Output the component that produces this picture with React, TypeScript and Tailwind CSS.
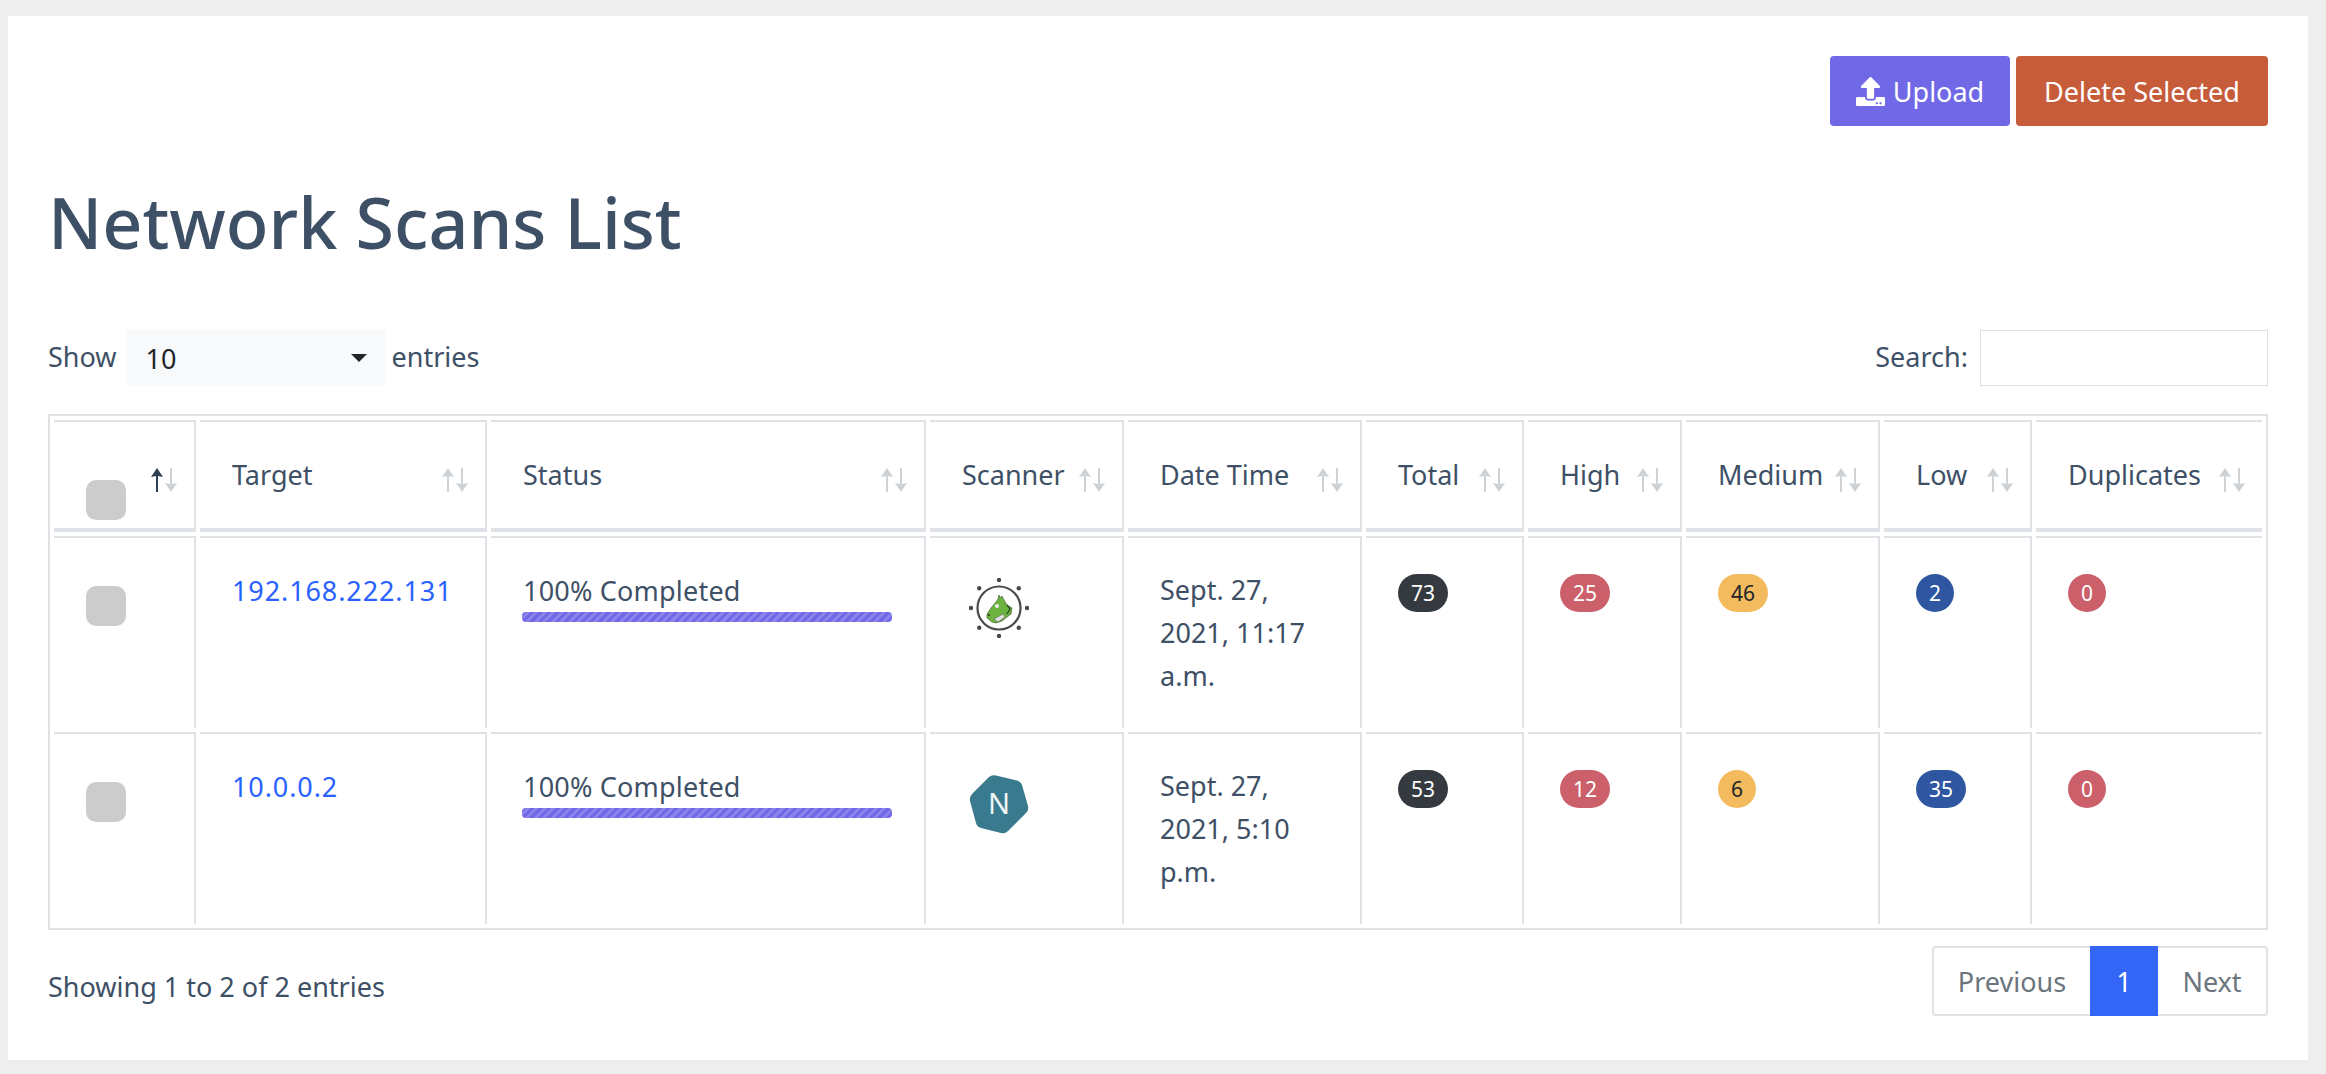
import { FaUpload } from 'react-icons/fa'

const COLUMNS = [
  { label: '', width: 142 },
  { label: 'Target', width: 287 },
  { label: 'Status', width: 435 },
  { label: 'Scanner', width: 194 },
  { label: 'Date Time', width: 234 },
  { label: 'Total', width: 158 },
  { label: 'High', width: 154 },
  { label: 'Medium', width: 194 },
  { label: 'Low', width: 148 },
  { label: 'Duplicates', width: 226 },
]

const ROWS = [
  { target: '192.168.222.131', scanner: 'openvas', date: 'Sept. 27, 2021, 11:17 a.m.', total: 73, high: 25, medium: 46, low: 2, dup: 0 },
  { target: '10.0.0.2', scanner: 'nessus', date: 'Sept. 27, 2021, 5:10 p.m.', total: 53, high: 12, medium: 6, low: 35, dup: 0 },
]

function SortArrows({ active }: { active?: boolean }) {
  return (
    <svg width="26" height="24" viewBox="0 0 26 24" className="absolute top-[46px] right-[17px]">
      <path d="M6 0L12 9L7 8V24H5V8L0 9Z" fill={active ? '#2c3e50' : '#cdd2d7'} />
      <path d="M19 0H21V16L26 15L20 24L14 15L19 16Z" fill="#cdd2d7" />
    </svg>
  )
}

function OpenVasLogo() {
  const dots = [0, 45, 90, 135, 180, 225, 270, 315]
  return (
    <svg width="60" height="60" viewBox="0 0 60 60">
      <circle cx="30" cy="30" r="21.5" fill="none" stroke="#4a4a4a" strokeWidth="2.2" />
      {dots.map(d => (
        <circle
          key={d}
          cx={30 + 28 * Math.cos((d * Math.PI) / 180)}
          cy={30 + 28 * Math.sin((d * Math.PI) / 180)}
          r="2.2"
          fill="#4a4a4a"
        />
      ))}
      <path
        d="M30 17L31 20L33 18L35 22L38 27L43 30L42 36L38 39L33 43L27 45L23 44L18 40L18 36L22 30L27 24L29 21Z"
        fill="#6cb33f"
        stroke="#35502a"
        strokeWidth="0.6"
      />
      <path d="M25 41L34 36L36 39L29 44Z" fill="#dfe2dc" stroke="#555" strokeWidth="0.5" />
      <circle cx="28" cy="28" r="2" fill="#f1f1f1" />
      <circle cx="20" cy="37" r="1" fill="#26331f" />
      <path d="M38 27L41 31L38 36" fill="none" stroke="#2f4a22" strokeWidth="1.3" />
    </svg>
  )
}

function NessusLogo() {
  return (
    <svg width="60" height="60" viewBox="0 0 60 60">
      <path
        d="M20 3Q23 0.500 27 1.500L48 6.500Q52 8 53 11L59 32Q60 36 57 39L39 57Q36 60 32 59L12 54Q8 53 7 49L1 27Q0 24 3 20Z"
        fill="#3a7a8e"
      />
      <text x="30" y="40" textAnchor="middle" fontSize="29" fontFamily="'Noto Sans', sans-serif" fill="#eef5f7">
        N
      </text>
    </svg>
  )
}

function Badge({ value, className }: { value: number; className: string }) {
  return (
    <span className={`mt-[5px] inline-flex h-[38px] min-w-[38px] items-center justify-center rounded-[19px] px-[13px] align-top text-[21px] leading-none ${className}`}>
      {value}
    </span>
  )
}

function Checkbox() {
  return <div className="h-10 w-10 rounded-[10px] bg-[#cccccc]" />
}

const tdClass = 'border-t-2 border-r-2 border-[#dee2e6] last:border-r-0 px-8 pt-[31px] align-top'

export default function App() {
  return (
    <div className="min-h-screen bg-[#eeeeee] pt-4 pr-[18px] pb-[14px] pl-2 font-['Noto_Sans',sans-serif] text-[27px] leading-[43px] text-[#3e5066]">
      <div className="bg-white px-10 pt-10 pb-11">
        <div className="flex justify-end gap-1.5">
          <button className="flex h-[70px] w-[180px] items-center justify-center gap-2 rounded bg-[#7068e6] text-white">
            <FaUpload className="h-[29px] w-[29px]" />
            Upload
          </button>
          <button className="h-[70px] w-[252px] rounded bg-[#c75c3a] text-white">Delete Selected</button>
        </div>

        <h1 className="mt-[53px] text-[70px] leading-[86px] font-medium">Network Scans List</h1>

        <div className="mt-[65px] flex h-14 items-center justify-between">
          <div className="flex items-center">
            <span className="-translate-y-0.5">Show</span>
            <div className="relative mr-[7px] ml-[10px] w-[258px]">
              <select
                defaultValue="10"
                className="h-14 w-full appearance-none bg-[#f8f9fa] pl-[19px] text-[#212529] outline-none"
              >
                <option value="10">10</option>
                <option value="25">25</option>
                <option value="50">50</option>
              </select>
              <svg width="16" height="8" viewBox="0 0 16 8" className="absolute top-[24px] right-[18px]">
                <path d="M0 0H16L8 8Z" fill="#212529" />
              </svg>
            </div>
            <span className="-translate-y-0.5">entries</span>
          </div>
          <div className="flex items-center gap-3">
            <span className="-translate-y-0.5">Search:</span>
            <input className="h-14 w-[288px] border border-[#dee2e6] bg-white outline-none" aria-label="Search" />
          </div>
        </div>

        <table className="mt-7 w-full table-fixed border-separate border-spacing-1 border-2 border-[#dee2e6]">
          <colgroup>
            {COLUMNS.map((c, i) => (
              <col key={i} style={{ width: c.width }} />
            ))}
          </colgroup>
          <thead>
            <tr>
              {COLUMNS.map((c, i) => (
                <th
                  key={i}
                  className={
                    i === 0
                      ? 'relative border-t-2 border-r-2 border-b-4 border-[#dee2e6] px-8 pt-[58px] pb-2 text-left font-normal'
                      : 'relative border-t-2 border-r-2 border-b-4 border-[#dee2e6] pt-[31px] pr-0 pb-8 pl-8 text-left font-normal whitespace-nowrap last:border-r-0'
                  }
                >
                  {i === 0 ? <Checkbox /> : c.label}
                  <SortArrows active={i === 0} />
                </th>
              ))}
            </tr>
          </thead>
          <tbody>
            {ROWS.map(r => (
              <tr key={r.target} className="h-[192px]">
                <td className={tdClass}>
                  <div className="mt-[17px]">
                    <Checkbox />
                  </div>
                </td>
                <td className={tdClass}>
                  <a href="#" className="tracking-[0.9px] text-[#2962ff]">
                    {r.target}
                  </a>
                </td>
                <td className={tdClass}>
                  <div className="leading-[43px] tracking-[0.2px]">100% Completed</div>
                  <div className="h-2.5 w-[370px] -translate-x-px rounded-[4px] bg-[repeating-linear-gradient(135deg,#7068e6_0px,#7068e6_3px,#8a83ec_3px,#8a83ec_6px)]" />
                </td>
                <td className="border-t-2 border-r-2 border-[#dee2e6] pt-10 pl-[39px] align-top">
                  {r.scanner === 'openvas' ? <OpenVasLogo /> : <NessusLogo />}
                </td>
                <td className={tdClass}>
                  <div className="-translate-y-px">{r.date}</div>
                </td>
                <td className={tdClass}>
                  <Badge value={r.total} className="bg-[#343a40] text-white" />
                </td>
                <td className={tdClass}>
                  <Badge value={r.high} className="bg-[#cb5f6a] text-white" />
                </td>
                <td className={tdClass}>
                  <Badge value={r.medium} className="bg-[#f4bb5e] text-[#212529]" />
                </td>
                <td className={tdClass}>
                  <Badge value={r.low} className="bg-[#2f56a0] text-white" />
                </td>
                <td className={tdClass}>
                  <Badge value={r.dup} className="bg-[#cb5f6a] text-white" />
                </td>
              </tr>
            ))}
          </tbody>
        </table>

        <div className="mt-4 flex items-start justify-between">
          <div className="pt-[19px]">Showing 1 to 2 of 2 entries</div>
          <div className="flex h-[70px] text-[#6c757d]">
            <button className="w-[158px] rounded-l border-y-2 border-l-2 border-[#dee2e6]">Previous</button>
            <button className="w-[68px] bg-[#3366f6] text-white">1</button>
            <button className="w-[110px] rounded-r border-y-2 border-r-2 border-[#dee2e6]">Next</button>
          </div>
        </div>
      </div>
    </div>
  )
}
